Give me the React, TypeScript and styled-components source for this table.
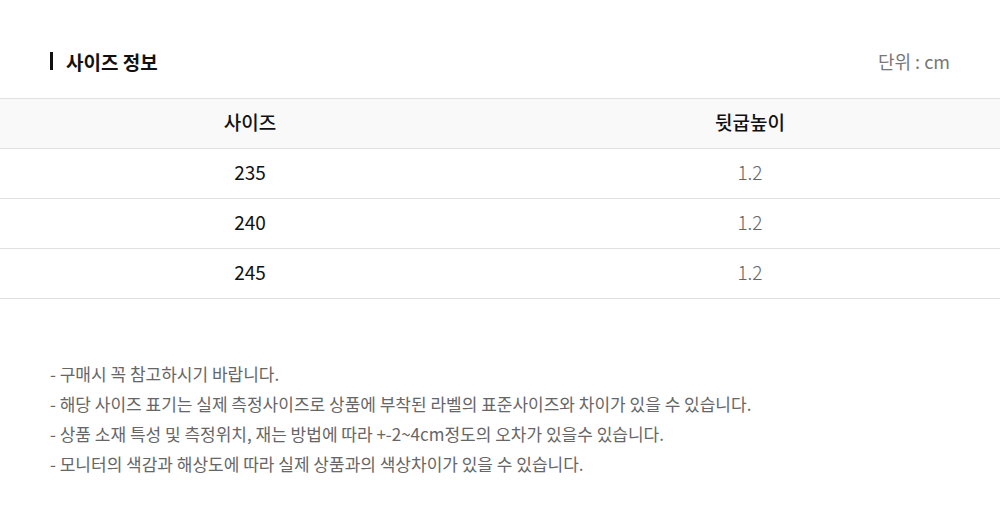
import React from "react";
import styled, { createGlobalStyle } from "styled-components";

const Global = createGlobalStyle`
  html, body { margin: 0; padding: 0; background: #fff; }
  body { font-family: "Noto Sans CJK KR", "Noto Sans", sans-serif; }
`;

const Page = styled.div`
  width: 1000px;
  padding-top: 46px;
`;

const Header = styled.div`
  display: flex;
  align-items: center;
  justify-content: space-between;
  padding: 0 50px;
  height: 30px;
  margin-bottom: 22px;
`;

const Title = styled.h2`
  margin: 0;
  display: flex;
  align-items: center;
  gap: 13px;
  font-size: 19px;
  font-weight: 700;
  color: #111;
  &::before {
    content: "";
    width: 3px;
    height: 18px;
    background: #111;
  }
`;

const Unit = styled.span`
  font-size: 18px;
  color: #777;
  font-weight: 400;
`;

const Table = styled.div`
  border-top: 1px solid #e0e0e0;
`;

const Row = styled.div<{ $head?: boolean }>`
  display: grid;
  grid-template-columns: 1fr 1fr;
  height: 49px;
  border-bottom: 1px solid #e0e0e0;
  background: ${(p) => (p.$head ? "#f9f9f9" : "#fff")};
`;

const Cell = styled.div<{ $tone: "head" | "key" | "val" }>`
  display: flex;
  align-items: center;
  justify-content: center;
  padding-bottom: 4px;
  font-size: 19px;
  font-weight: ${(p) => (p.$tone === "head" ? 500 : p.$tone === "key" ? 400 : 300)};
  color: ${(p) => (p.$tone === "val" ? "#666" : "#111")};
`;

const Notes = styled.ul`
  list-style: none;
  margin: 60px 0 0;
  padding: 0 50px;
`;

const Note = styled.li`
  font-size: 17px;
  line-height: 30px;
  color: #666;
`;

const rows = [
  ["235", "1.2"],
  ["240", "1.2"],
  ["245", "1.2"],
];

const notes = [
  "- 구매시 꼭 참고하시기 바랍니다.",
  "- 해당 사이즈 표기는 실제 측정사이즈로 상품에 부착된 라벨의 표준사이즈와 차이가 있을 수 있습니다.",
  "- 상품 소재 특성 및 측정위치, 재는 방법에 따라 +-2~4cm정도의 오차가 있을수 있습니다.",
  "- 모니터의 색감과 해상도에 따라 실제 상품과의 색상차이가 있을 수 있습니다.",
];

export default function App() {
  return (
    <Page>
      <Global />
      <Header>
        <Title>사이즈 정보</Title>
        <Unit>단위 : cm</Unit>
      </Header>
      <Table>
        <Row $head>
          <Cell $tone="head">사이즈</Cell>
          <Cell $tone="head">뒷굽높이</Cell>
        </Row>
        {rows.map(([k, v]) => (
          <Row key={k}>
            <Cell $tone="key">{k}</Cell>
            <Cell $tone="val">{v}</Cell>
          </Row>
        ))}
      </Table>
      <Notes>
        {notes.map((n) => (
          <Note key={n}>{n}</Note>
        ))}
      </Notes>
    </Page>
  );
}
